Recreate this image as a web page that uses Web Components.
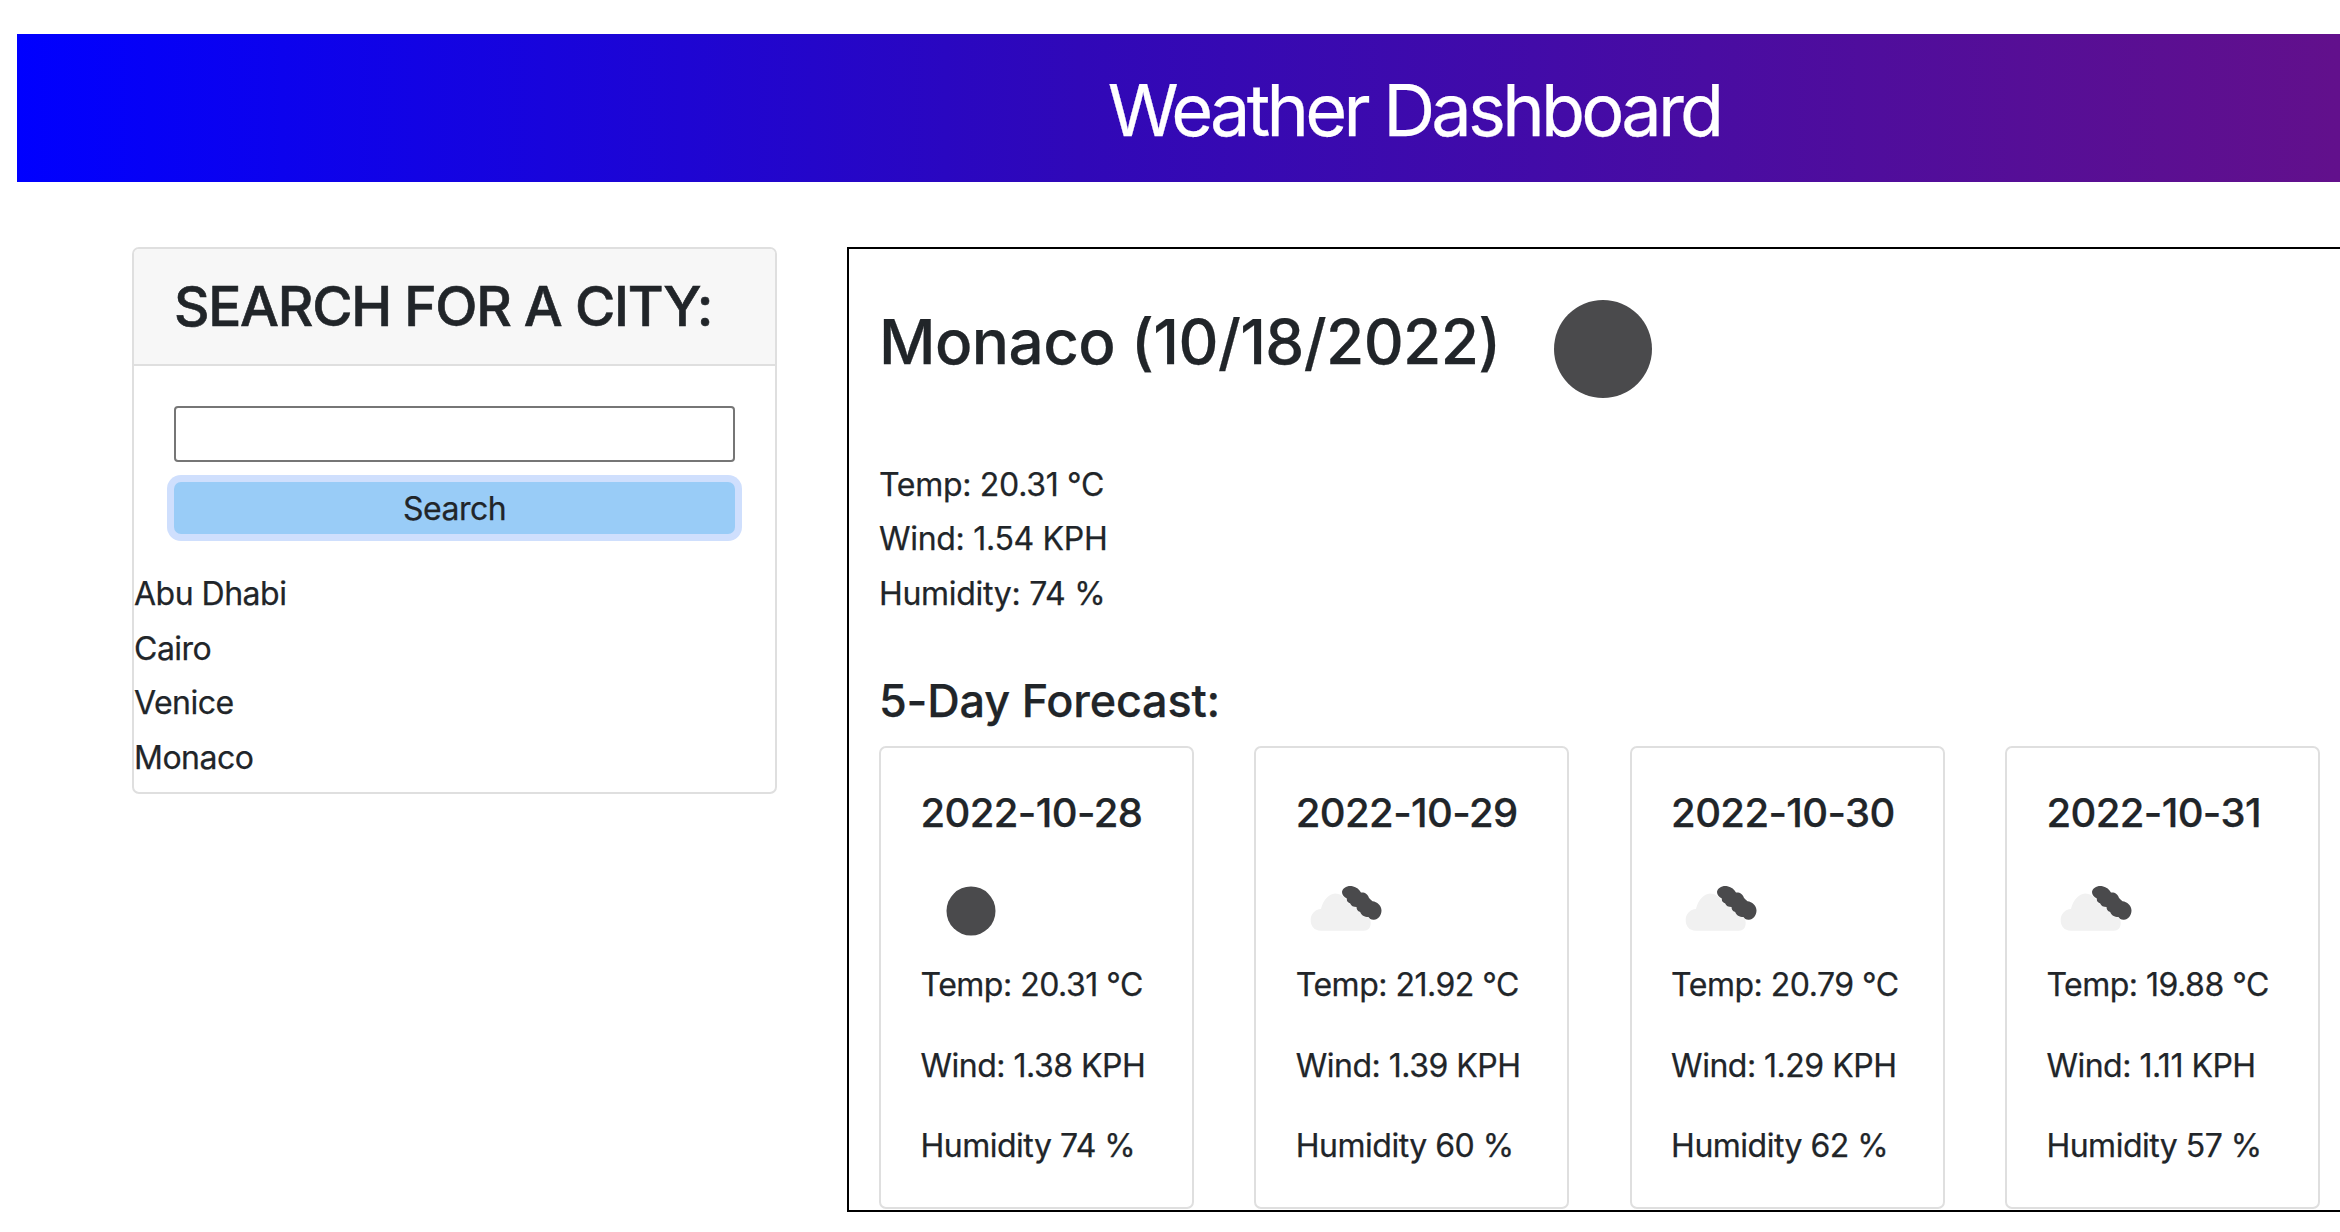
<!DOCTYPE html>
<html>
<head>
<meta charset="utf-8">
<title>Weather Dashboard</title>
<style>
    html,body{ margin:0; height:100%; overflow:hidden; background:#fff; }
    body{ font-family:Inter,"Liberation Sans",sans-serif; color:#212529; -webkit-text-stroke:.25px currentColor; }
</style>
</head>
<body>
<weather-app>
    <app-banner slot="banner">Weather Dashboard</app-banner>
    <search-panel slot="side" title="SEARCH FOR A CITY:">
        <city-item>Abu Dhabi</city-item>
        <city-item>Cairo</city-item>
        <city-item>Venice</city-item>
        <city-item>Monaco</city-item>
    </search-panel>
    <current-weather slot="main" city="Monaco (10/18/2022)" temp="Temp: 20.31 °C" wind="Wind: 1.54 KPH" humidity="Humidity: 74 %">
        <forecast-card date="2022-10-28" icon="clear" temp="Temp: 20.31 °C" wind="Wind: 1.38 KPH" humidity="Humidity 74 %"></forecast-card>
        <forecast-card date="2022-10-29" icon="clouds" temp="Temp: 21.92 °C" wind="Wind: 1.39 KPH" humidity="Humidity 60 %"></forecast-card>
        <forecast-card date="2022-10-30" icon="clouds" temp="Temp: 20.79 °C" wind="Wind: 1.29 KPH" humidity="Humidity 62 %"></forecast-card>
        <forecast-card date="2022-10-31" icon="clouds" temp="Temp: 19.88 °C" wind="Wind: 1.11 KPH" humidity="Humidity 57 %"></forecast-card>
    </current-weather>
</weather-app>
<script>
// the two openweather style icons, same 100x100 box
const icons={
    clear:`<circle cx="50" cy="50" r="24.5" fill="#4a4a4c"/>`,
    clouds:`<path fill="#f1f1f1" d="M25 69.7C18 69.7 14.7 65 14.7 59C14.7 53 19 48.5 25 48C27 39 33 33 39 32.5C45 32.5 49 36 52 42L70 52C73 55 74.7 58 74.7 62C74.7 67 72 69.7 68 69.7Z"/>
    <path fill="#4a4a4c" d="M46 31C46.5 26.5 52 24 56.5 25.2C60.5 26 63.5 28.5 65 31.5C68.5 31 72 33 73 37C74 38 75.5 39.5 76.5 40.2C81 40.5 85.5 44.5 85.5 49.5C85.5 54.5 82 58.5 78 58.8C75 59 73.5 57.5 72.5 56C68.5 56 65 54 64.2 51C61.5 50.5 60.5 48 60.5 46C57.5 46 55 45 54.2 42.5C51.5 41.5 50.5 39.5 50.8 37.5C48 36 46 34 46 31Z"/>`
}
function iconSvg(name,size){
    return `<svg width="${size}" height="${size}" viewBox="0 0 100 100" style="display:block;filter:blur(.4px)">${icons[name]}</svg>`
}

class WeatherApp extends HTMLElement{
    constructor(){
        super()
        this.attachShadow({mode:"open"}).innerHTML=`
        <style>
            :host{ display:block; width:2811px; padding:34px 0 0 17px; box-sizing:border-box; }
            .content{ display:flex; align-items:flex-start; padding:65px 0 0 115px; gap:70px; }
        </style>
        <slot name="banner"></slot>
        <div class="content">
            <slot name="side"></slot>
            <slot name="main"></slot>
        </div>`
    }
}
class AppBanner extends HTMLElement{
    constructor(){
        super()
        this.attachShadow({mode:"open"}).innerHTML=`
        <style>
            :host{
                display:flex; align-items:center; justify-content:center;
                height:148px; color:#fff;
                background:linear-gradient(90deg,#0000ff 0%,#3008b8 38%,#62108c 83%,#6e128a 100%);
                font-size:72px; letter-spacing:-3.8px; padding-top:2px; box-sizing:border-box;
            }
        </style>
        <slot></slot>`
    }
}
class SearchPanel extends HTMLElement{
    constructor(){
        super()
        this.attachShadow({mode:"open"}).innerHTML=`
        <style>
            :host{
                display:block; width:645px; height:547px; box-sizing:border-box; flex:none;
                border:2px solid #dfdfdf; border-radius:7px; overflow:hidden;
            }
            .head{
                height:115px; padding-left:40px; background:#f7f7f7;
                border-bottom:2px solid #dfdfdf;
                font-size:55px; line-height:115px; font-weight:500; letter-spacing:-1.3px;
                white-space:nowrap; -webkit-text-stroke:.6px currentColor;
            }
            .form{ padding:40px 40px 33px 40px; }
            input{
                display:block; width:100%; height:56px; box-sizing:border-box; margin:0 0 20px;
                border:2px solid #767676; border-radius:4px; background:#fff;
            }
            button{
                display:block; width:100%; height:52px; padding:0; border:0; border-radius:7px;
                background:#99ccf7; box-shadow:0 0 0 7px #cfdffd; color:#212529;
                font:32px Inter,"Liberation Sans",sans-serif; letter-spacing:-.5px;
            }
        </style>
        <div class="head"></div>
        <div class="form">
            <input type="text">
            <button type="button">Search</button>
        </div>
        <slot></slot>`
    }
    connectedCallback(){
        this.shadowRoot.querySelector('.head').textContent=this.getAttribute('title')
    }
}
class CityItem extends HTMLElement{
    constructor(){
        super()
        this.attachShadow({mode:"open"}).innerHTML=`
        <style>
            :host{ display:block; height:54.5px; font-size:32px; line-height:54.5px; letter-spacing:-.5px; }
        </style>
        <slot></slot>`
    }
}
class CurrentWeather extends HTMLElement{
    constructor(){
        super()
        this.attachShadow({mode:"open"}).innerHTML=`
        <style>
            :host{
                display:block; width:1960px; height:965px; box-sizing:border-box; flex:none;
                border:2px solid #000; padding:0 0 0 30px; overflow:hidden;
            }
            .top{ display:flex; height:200px; margin-bottom:9px; }
            h2{
                flex:none; width:624px; margin:0; font-size:62px; font-weight:500;
                line-height:185px; letter-spacing:-.6px; white-space:nowrap;
            }
            p{ margin:0; font-size:32px; line-height:54.4px; letter-spacing:-.3px; }
            h3{ margin:53px 0 18px; font-size:45px; font-weight:500; line-height:54px; letter-spacing:-.2px; }
            .cards{ display:flex; gap:60.3px; }
        </style>
        <div class="top"><h2 id="city"></h2><span id="icon"></span></div>
        <p id="temp"></p><p id="wind"></p><p id="humidity"></p>
        <h3>5-Day Forecast:</h3>
        <div class="cards"><slot></slot></div>`
    }
    connectedCallback(){
        const root=this.shadowRoot
        root.getElementById('city').textContent=this.getAttribute('city')
        root.getElementById('icon').innerHTML=iconSvg('clear',200)
        root.getElementById('temp').textContent=this.getAttribute('temp')
        root.getElementById('wind').textContent=this.getAttribute('wind')
        root.getElementById('humidity').textContent=this.getAttribute('humidity')
    }
}
class ForecastCard extends HTMLElement{
    constructor(){
        super()
        this.attachShadow({mode:"open"}).innerHTML=`
        <style>
            :host{
                display:block; width:315px; height:463px; box-sizing:border-box; flex:none;
                border:2px solid #dfdfdf; border-radius:7px; padding:38px 0 0 39.5px;
            }
            h5{ margin:0 0 21px; font-size:40px; font-weight:500; line-height:54px; letter-spacing:-.6px; white-space:nowrap; }
            #icon{ display:block; margin-bottom:-3px; }
            p{ margin:0 0 26.3px; font-size:32px; line-height:54px; letter-spacing:-.5px; white-space:nowrap; }
        </style>
        <h5 id="date"></h5>
        <span id="icon"></span>
        <p id="temp"></p><p id="wind"></p><p id="humidity"></p>`
    }
    connectedCallback(){
        const root=this.shadowRoot
        root.getElementById('date').textContent=this.getAttribute('date')
        root.getElementById('icon').innerHTML=iconSvg(this.getAttribute('icon'),100)
        root.getElementById('temp').textContent=this.getAttribute('temp')
        root.getElementById('wind').textContent=this.getAttribute('wind')
        root.getElementById('humidity').textContent=this.getAttribute('humidity')
    }
}
window.customElements.define('weather-app',WeatherApp)
window.customElements.define('app-banner',AppBanner)
window.customElements.define('search-panel',SearchPanel)
window.customElements.define('city-item',CityItem)
window.customElements.define('current-weather',CurrentWeather)
window.customElements.define('forecast-card',ForecastCard)
</script>
</body>
</html>
